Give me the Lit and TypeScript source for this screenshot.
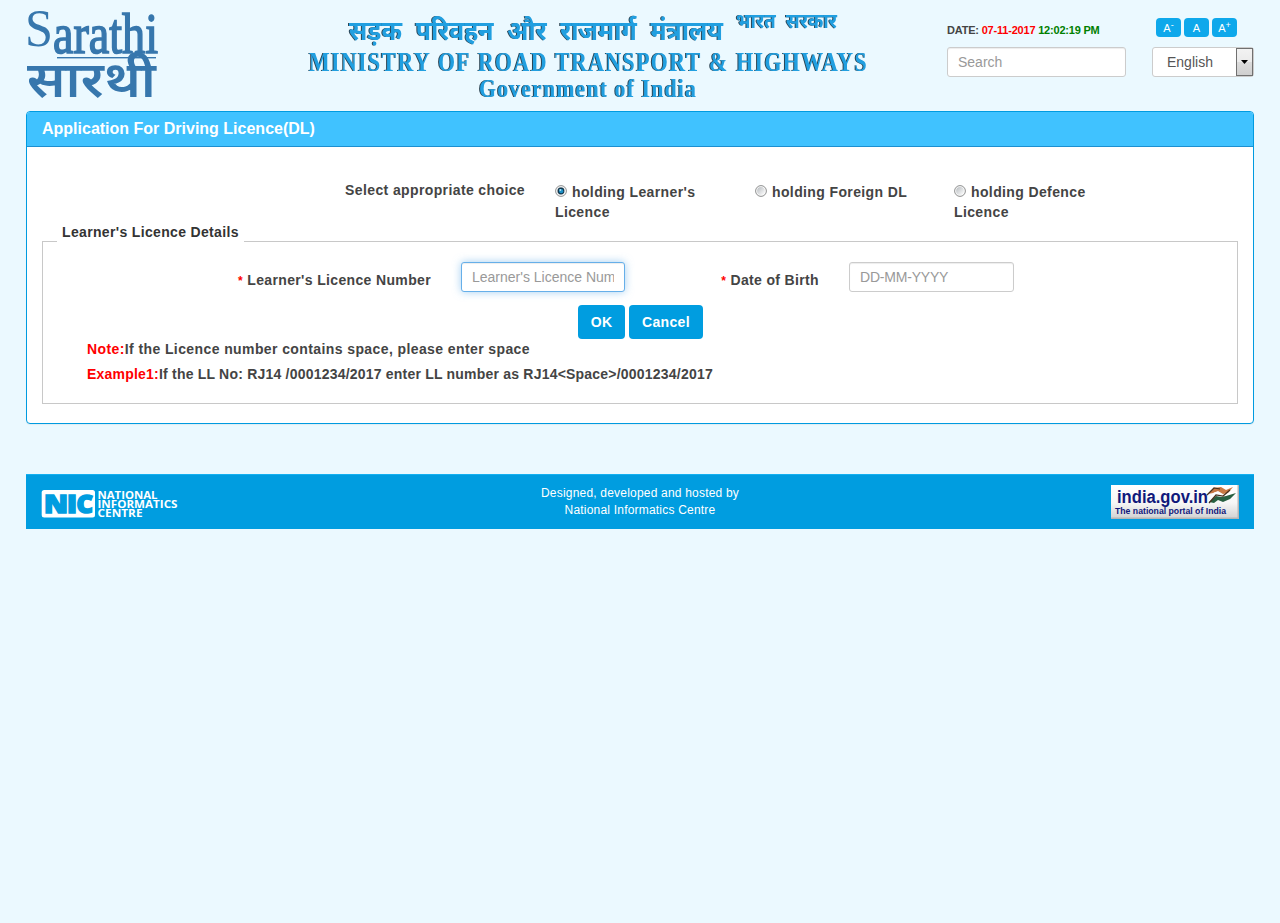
import { LitElement, html, svg, css } from "lit";
import { customElement, state } from "lit/decorators.js";

@customElement("app-root")
export class AppRoot extends LitElement {
  static styles = css`
    :host {
      display: block;
      min-height: 923px;
      background: #ebf9ff;
      font: 14px/20px "Liberation Sans", Arial, sans-serif;
      color: #444;
    }
    * { box-sizing: border-box; }
    .page { padding: 0 26px; }
    .header { display: flex; height: 111px; }
    .logo { display: block; margin-top: 8px; flex: none; overflow: visible; }
    .title { display: block; margin-left: 139px; flex: none; overflow: visible; }
    .title text { fill: #219fe0; filter: drop-shadow(-0.6px 0.8px 0.7px #2c4453); font-weight: bold; }
    .latin { font-family: "Liberation Serif", serif; }
    .hindi { font-family: "Noto Sans Devanagari", "Lohit Devanagari", "Noto Sans", FreeSans, sans-serif; }
    .date-col { width: 179px; margin-left: 77px; padding-top: 20px; }
    .date { font-size: 11px; font-weight: bold; letter-spacing: -.2px; white-space: nowrap; height: 27px; }
    .day { color: #f00; }
    .time { color: green; }
    .field {
      display: block; width: 100%; height: 30px; padding: 0 10px; border: 1px solid #ccc;
      border-radius: 3px; background: #fff; box-shadow: inset 0 1px 1px rgba(0,0,0,.075);
      font: 14px "Liberation Sans", Arial, sans-serif; color: #555; outline: none;
    }
    .field::placeholder { color: #999; opacity: 1; }
    .active { border-color: #66afe9; box-shadow: inset 0 1px 1px rgba(0,0,0,.075), 0 0 8px rgba(102,175,233,.6); }
    .dob::placeholder { letter-spacing: -.2px; }
    .lang-col { width: 102px; margin-left: 26px; padding-top: 18px; }
    .sizes { display: flex; gap: 3px; padding-left: 4px; height: 29px; }
    .size {
      width: 25px; height: 19px; border-radius: 4px; background: #0ea8eb; color: #fff;
      font-size: 11px; line-height: 20px; text-align: center;
    }
    .size sup { font-size: 9px; line-height: 0; vertical-align: 4px; }
    .select {
      display: flex; justify-content: space-between; height: 30px; padding-left: 14px;
      border: 1px solid #ccc; border-radius: 3px; background: #fff; line-height: 28px; color: #555;
    }
    .arrow {
      display: flex; align-items: center; justify-content: center; width: 17px; height: 28px;
      border: 1px solid #707070; background: linear-gradient(#f2f2f2, #ebebeb 50%, #dcdcdc 51%, #cfcfcf);
    }
    .panel { height: 313px; border: 1px solid #009be0; border-radius: 4px; background: #fff; box-shadow: 0 1px 1px rgba(0,0,0,.05); }
    .panel-title {
      height: 35px; padding-left: 15px; background: #40c2ff; border-bottom: 1px solid #1d8fd0;
      border-radius: 3px 3px 0 0; color: #fff; font-weight: bold; font-size: 16px; line-height: 34px;
    }
    .bold { font-weight: bold; letter-spacing: .38px; }
    .choices { display: grid; grid-template-columns: 498px 200px 199px 200px; padding: 33px 0 0; height: 75px; }
    .choice-label { text-align: right; }
    .choice { display: block; padding: 2px 10px 0 30px; }
    .choice svg { display: inline-block; vertical-align: 0; margin-right: 5px; }
    .box { position: relative; height: 163px; margin: 19px 15px 0; border: 1px solid #c8c8c8; }
    .legend { position: absolute; left: 14px; top: -20px; padding: 0 5px; background: #fff; color: #333; letter-spacing: .34px; }
    .row { display: grid; grid-template-columns: 388px 30px 164px 194px 30px 165px; padding-top: 20px; height: 63px; }
    .label { padding-top: 8px; text-align: right; white-space: nowrap; letter-spacing: .35px; }
    .star { color: #f00; font-size: 12px; font-weight: bold; }
    .buttons { display: flex; gap: 4px; padding-left: 535px; height: 34px; }
    .btn { height: 34px; padding: 0; border: 0; border-radius: 4px; background: #009de0; color: #fff; font: bold 14px "Liberation Sans", Arial, sans-serif; letter-spacing: .35px; }
    .ok { width: 47px; }
    .cancel { width: 74px; }
    .notes { padding-left: 44px; line-height: 25px; margin-top: -2px; letter-spacing: .4px; }
    .example { letter-spacing: .21px; }
    .red { color: #f00; }
    .footer {
      display: grid; grid-template-columns: 1fr auto 1fr; height: 55px; margin-top: 50px; padding: 10px 15px 0;
      background: #009de0; border-top: 1px solid #14b0f0; color: #fff;
    }
    .hosted { font-size: 12px; line-height: 17px; letter-spacing: .2px; text-align: center; }
    .badge { display: block; justify-self: end; }
    .nic { display: block; margin-top: 4px; overflow: visible; }
  `;

  @state() private selected = 0;

  private radio(on: boolean) {
    return html`<svg width="12" height="12" viewBox="0 0 12 12">
      <defs><linearGradient id="g" x1="0" y1="0" x2="1" y2="1"><stop offset="0" stop-color="#b8bcc0" /><stop offset="1" stop-color="#fff" /></linearGradient></defs>
      <circle cx="6" cy="6" r="5.4" fill="#fafafa" stroke="#8e8f8f" />
      <circle cx="6" cy="6" r="3.9" fill="url(#g)" />
      ${on ? svg`<circle cx="6" cy="6" r="3.4" fill="#12384f"/><circle cx="6.2" cy="6.2" r="2.1" fill="#1d91c7"/><circle cx="5.3" cy="5" r="1" fill="#b4e4f8"/>` : ""}
    </svg>`;
  }

  private logo() {
    return html`<svg class="logo" width="132" height="93" viewBox="26 8 132 93" fill="#3777ad">
      <g font-family="Liberation Serif, serif">
        <text x="25" y="46" font-size="53" textLength="28" lengthAdjust="spacingAndGlyphs">S</text>
        <text x="53" y="53" font-size="57" textLength="105" lengthAdjust="spacingAndGlyphs" stroke="#3777ad" stroke-width="1.6">arathi</text>
      </g>
      <text x="27" y="97" font-size="50" textLength="129" lengthAdjust="spacingAndGlyphs" class="hindi" font-weight="600">सारथी</text>
      <rect x="57" y="57" width="99" height="1.4" />
    </svg>`;
  }

  private title() {
    return html`<svg class="title" width="573" height="108" viewBox="297 0 573 108">
      <text class="hindi" x="349" y="40" font-size="27" textLength="374" word-spacing="8" lengthAdjust="spacingAndGlyphs">सड़क परिवहन और राजमार्ग मंत्रालय</text>
      <text class="hindi" x="736" y="28" font-size="20" textLength="101" word-spacing="6" lengthAdjust="spacingAndGlyphs">भारत सरकार</text>
      <text class="latin" x="309" y="71" font-size="26.5" textLength="559" letter-spacing="1.6" word-spacing="1" lengthAdjust="spacingAndGlyphs">MINISTRY OF ROAD TRANSPORT &amp; HIGHWAYS</text>
      <text class="latin" x="479" y="97" font-size="25" textLength="218" letter-spacing="1.2" lengthAdjust="spacingAndGlyphs">Government of India</text>
    </svg>`;
  }

  private nic() {
    return html`<svg class="nic" width="137" height="30" viewBox="41 489 137 30" font-family="Open Sans, sans-serif" font-weight="bold">
      <rect x="41.7" y="490" width="53.3" height="27.5" rx="2.5" fill="#fff" />
      <g font-size="25" font-weight="800" fill="#009de0" stroke="#009de0" stroke-width="1.6">
        <text x="44" y="512.8" textLength="24" lengthAdjust="spacingAndGlyphs">N</text>
        <text x="67" y="512.8" textLength="10" lengthAdjust="spacingAndGlyphs">I</text>
        <text x="76.500" y="512.8" textLength="16.500" lengthAdjust="spacingAndGlyphs">C</text>
      </g>
      <g fill="#fff" font-size="10.3">
        <text x="97.5" y="498.7" textLength="60" lengthAdjust="spacingAndGlyphs">NATIONAL</text>
        <text x="97.5" y="507.7" textLength="80" lengthAdjust="spacingAndGlyphs">INFORMATICS</text>
        <text x="97.5" y="516.7" textLength="45" lengthAdjust="spacingAndGlyphs">CENTRE</text>
      </g>
    </svg>`;
  }

  private portal() {
    return html`<svg class="badge" width="128" height="34" viewBox="0 0 128 34">
      <defs><linearGradient id="b" x1="0" y1="0" x2="0" y2="1"><stop offset="0" stop-color="#fff" /><stop offset=".55" stop-color="#f6f6f6" /><stop offset="1" stop-color="#d4d4d4" /></linearGradient></defs>
      <rect width="128" height="34" fill="#b5b5b5" /><rect width="126.5" height="32.5" fill="url(#b)" />
      <text x="6" y="18" font-family="Liberation Sans" font-weight="bold" font-size="17.5" fill="#10187b" textLength="91" lengthAdjust="spacingAndGlyphs">india.gov.in</text>
      <text x="4" y="29" font-family="Liberation Sans" font-weight="bold" font-size="8.3" fill="#10187b" textLength="111" lengthAdjust="spacingAndGlyphs">The national portal of India</text>
      <path d="M97 9L103 3L110 2L115 5L122 2L117 8L112 9L107 6L102 8Z" fill="#c97945" />
      <path d="M98 13L104 7L108 8L112 11L124 4L120 10L113 13L108 11Z" fill="#fff" />
      <path d="M98 17L105 11L110 12L115 11L125 8L119 14L112 17L107 15L103 18Z" fill="#286042" />
      <path d="M96 10L103 3L109 4M98 18L105 10L112 11L119 5" fill="none" stroke="#49301d" stroke-width="1.2" />
    </svg>`;
  }

  render() {
    const choices = ["holding Learner's Licence", "holding Foreign DL", "holding Defence Licence"];
    return html`<div class="page">
      <header class="header">
        ${this.logo()}${this.title()}
        <div class="date-col">
          <div class="date">DATE: <span class="day">07-11-2017</span> <span class="time">12:02:19 PM</span></div>
          <input class="field" placeholder="Search" />
        </div>
        <div class="lang-col">
          <div class="sizes"><span class="size">A<sup>-</sup></span><span class="size">A</span><span class="size">A<sup>+</sup></span></div>
          <div class="select">English<span class="arrow"><svg width="7" height="4"><path d="M0 0h7L3.500 4z" fill="#000" /></svg></span></div>
        </div>
      </header>
      <main class="panel">
        <div class="panel-title">Application For Driving Licence(DL)</div>
        <div class="choices bold">
          <div class="choice-label">Select appropriate choice</div>
          ${choices.map((c, i) => html`<label class="choice" @click=${() => (this.selected = i)}>${this.radio(this.selected === i)}${c}</label>`)}
        </div>
        <section class="box">
          <div class="legend bold">Learner's Licence Details</div>
          <div class="row">
            <div class="label bold"><span class="star">*</span> Learner's Licence Number</div><i></i>
            <input class="field active" placeholder="Learner's Licence Number" />
            <div class="label bold"><span class="star">*</span> Date of Birth</div><i></i>
            <input class="field dob" placeholder="DD-MM-YYYY" />
          </div>
          <div class="buttons"><button class="btn ok">OK</button><button class="btn cancel">Cancel</button></div>
          <div class="notes bold">
            <div><span class="red">Note:</span>If the Licence number contains space, please enter space</div>
            <div class="example"><span class="red">Example1:</span>If the LL No: RJ14 /0001234/2017 enter LL number as RJ14&lt;Space&gt;/0001234/2017</div>
          </div>
        </section>
      </main>
      <footer class="footer">
        ${this.nic()}
        <div class="hosted">Designed, developed and hosted by<br />National Informatics Centre</div>
        ${this.portal()}
      </footer>
    </div>`;
  }
}
